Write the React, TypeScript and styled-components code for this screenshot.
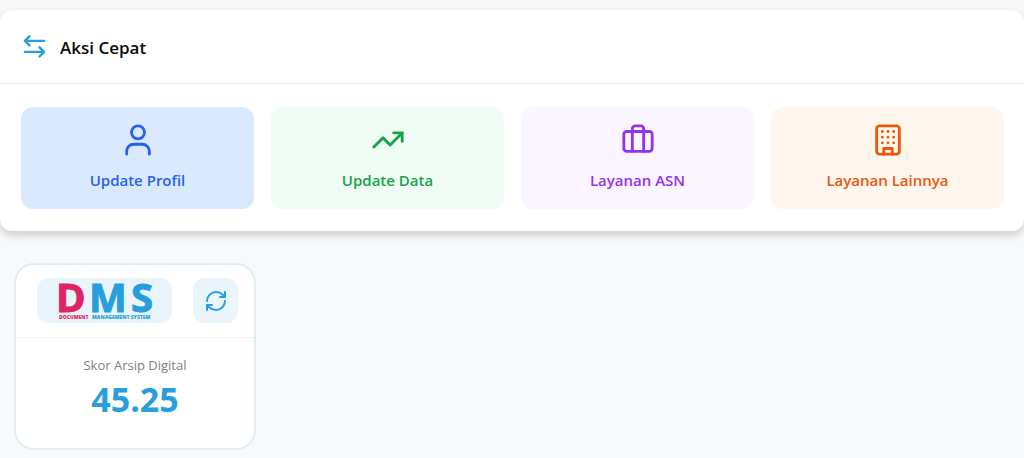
import React from "react";
import styled, { createGlobalStyle } from "styled-components";

const GlobalStyle = createGlobalStyle`
  *, *::before, *::after { box-sizing: border-box; }
  body {
    margin: 0;
    background: #f8f9fb;
    color: #0a0a0a;
    font-family: "Segoe UI", "Open Sans", "Noto Sans", sans-serif;
    overflow-x: hidden;
  }
  button { font: inherit; border: 0; cursor: pointer; }
`;

const Page = styled.main`
  display: flex;
  flex-direction: column;
  gap: 32px;
  padding: 10px 0 8px;
`;

const Panel = styled.section`
  background: #ffffff;
  border-radius: 12px;
  box-shadow: 0 4px 8px rgba(0, 0, 0, 0.18);
`;

const PanelHeader = styled.header`
  display: flex;
  align-items: center;
  gap: 13px;
  height: 74px;
  padding: 0 22px;
  border-bottom: 1px solid #e5e7eb;
`;

const PanelTitle = styled.h2`
  margin: 0;
  padding-top: 2px;
  font-size: 17px;
  line-height: 24px;
  font-weight: 600;
`;

const ActionGrid = styled.div`
  display: grid;
  grid-template-columns: repeat(4, 1fr);
  gap: 17px;
  padding: 23px 20px 22px 21px;
`;

const ActionButton = styled.button<{ $ink: string; $fill: string }>`
  display: flex;
  flex-direction: column;
  align-items: center;
  gap: 8px;
  padding: 16px 16px 14px;
  border-radius: 12px;
  background: ${(p) => p.$fill};
  color: ${(p) => p.$ink};
`;

const ActionLabel = styled.span`
  font-size: 15px;
  line-height: 30px;
  font-weight: 600;
`;

const Icon = styled.svg.attrs({ "aria-hidden": true, viewBox: "0 0 24 24" })<{ $size: number; $stroke?: number }>`
  display: block;
  flex: none;
  width: ${(p) => p.$size}px;
  height: ${(p) => p.$size}px;
  fill: none;
  stroke: currentColor;
  stroke-width: ${(p) => p.$stroke ?? 2};
  stroke-linecap: round;
  stroke-linejoin: round;
`;

const HeaderIcon = styled(Icon)`
  color: #279fdc;
`;

const ScoreList = styled.div`
  display: flex;
  flex-wrap: wrap;
  padding: 0 14px;
`;

const ScoreCard = styled.article`
  width: 242px;
  background: #ffffff;
  border: 2px solid #e2eef5;
  border-radius: 20px;
`;

const ScoreHeader = styled.div`
  display: flex;
  justify-content: space-between;
  padding: 13px 16px 14px 21px;
  border-bottom: 1px solid #f1f4f7;
`;

const LogoBox = styled.div`
  width: 135px;
  height: 45px;
  border-radius: 12px;
  background: #e9f4fb;
`;

const Logo = styled.svg`
  display: block;
  width: 135px;
  height: 45px;
  overflow: visible;
  font-family: "Open Sans", "Noto Sans", sans-serif;
`;

const RefreshButton = styled.button`
  display: grid;
  place-items: center;
  width: 45px;
  height: 45px;
  padding: 0;
  border-radius: 12px;
  background: #e9f4fb;
  color: #279fdc;
`;

const ScoreBody = styled.div`
  display: flex;
  flex-direction: column;
  align-items: center;
  padding: 17px 16px 24px;
`;

const ScoreLabel = styled.span`
  font-size: 13px;
  line-height: 20px;
  color: #7b8087;
`;

const ScoreValue = styled.strong`
  font-size: 34px;
  line-height: 49px;
  font-weight: 700;
  color: #279fdc;
`;

const actions = [
  {
    label: "Update Profil",
    ink: "#2563eb",
    fill: "#dbe9fe",
    icon: (
      <>
        <circle cx="12" cy="6.6" r="4.6" />
        <path d="M20 22v-2a5 5 0 0 0-5-5H9a5 5 0 0 0-5 5v2" />
      </>
    ),
  },
  {
    label: "Update Data",
    ink: "#16a34a",
    fill: "#f0fdf4",
    icon: (
      <>
        <path d="M22 7l-8.500 8.500-5-5L2 17" />
        <path d="M16 7h6v6" />
      </>
    ),
  },
  {
    label: "Layanan ASN",
    ink: "#9333ea",
    fill: "#faf5ff",
    icon: (
      <>
        <rect x="2" y="6" width="20" height="14" rx="2" />
        <path d="M16 20V4a2 2 0 0 0-2-2h-4a2 2 0 0 0-2 2v16" />
      </>
    ),
  },
  {
    label: "Layanan Lainnya",
    ink: "#ea580c",
    fill: "#fff6ed",
    icon: (
      <>
        <rect x="4" y="2" width="16" height="20" rx="2" />
        <path d="M9 22v-4h6v4M8 6h.01M12 6h.01M16 6h.01M8 10h.01M12 10h.01M16 10h.01M8 14h.01M12 14h.01M16 14h.01" />
      </>
    ),
  },
];

export default function App() {
  return (
    <>
      <GlobalStyle />
      <Page>
        <Panel>
          <PanelHeader>
            <HeaderIcon $size={25} $stroke={2.3}>
              <path d="M21.200 6.600H3M7.200 2.200L2.800 6.600 7.200 11M2.800 17.200H21M16.800 12.800L21.200 17.200 16.800 21.600" />
            </HeaderIcon>
            <PanelTitle>Aksi Cepat</PanelTitle>
          </PanelHeader>
          <ActionGrid>
            {actions.map((a) => (
              <ActionButton key={a.label} type="button" $ink={a.ink} $fill={a.fill}>
                <Icon $size={34}>{a.icon}</Icon>
                <ActionLabel>{a.label}</ActionLabel>
              </ActionButton>
            ))}
          </ActionGrid>
        </Panel>
        <ScoreList>
          <ScoreCard>
            <ScoreHeader>
              <LogoBox>
                <Logo viewBox="0 0 135 45" role="img" aria-label="DMS Document Management System">
                  <text y="34" fontSize="40" fontWeight="700">
                    <tspan x="19" fill="#e02463" stroke="#e02463">D</tspan>
                    <tspan x="52" fill="#279fdc" stroke="#279fdc">M</tspan>
                    <tspan x="94" fill="#279fdc" stroke="#279fdc">S</tspan>
                  </text>
                  <text y="41" fontSize="5" fontWeight="800">
                    <tspan x="22" fill="#e02463">DOCUMENT</tspan>
                    <tspan x="55" fill="#279fdc">MANAGEMENT SYSTEM</tspan>
                  </text>
                </Logo>
              </LogoBox>
              <RefreshButton type="button" aria-label="Refresh">
                <Icon $size={24}>
                  <path d="M3 12a9 9 0 0 1 9-9 9.750 9.750 0 0 1 6.740 2.740L21 8" />
                  <path d="M21 3v5h-5" />
                  <path d="M21 12a9 9 0 0 1-9 9 9.750 9.750 0 0 1-6.740-2.740L3 16" />
                  <path d="M8 16H3v5" />
                </Icon>
              </RefreshButton>
            </ScoreHeader>
            <ScoreBody>
              <ScoreLabel>Skor Arsip Digital</ScoreLabel>
              <ScoreValue>45.25</ScoreValue>
            </ScoreBody>
          </ScoreCard>
        </ScoreList>
      </Page>
    </>
  );
}
